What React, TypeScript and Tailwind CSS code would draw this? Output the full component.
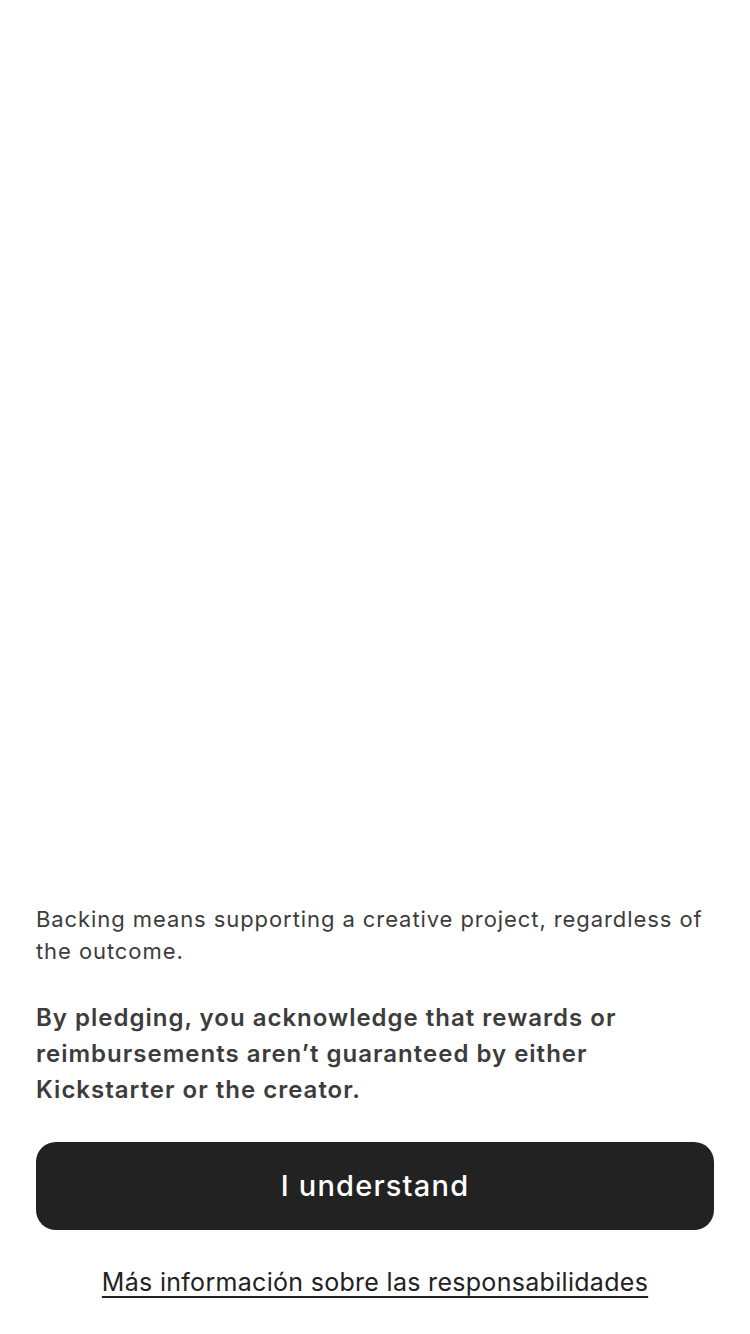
export default function App() {
  return (
    <div
      className="min-h-screen w-full bg-white flex flex-col justify-end px-[36px] pb-[37px]"
      style={{ fontFamily: 'Inter, "Noto Sans", sans-serif' }}
    >
      <p className="text-[22px] leading-[32px] text-[#3c3c3c] tracking-[0.92px]">
        Backing means supporting a creative project, regardless of the outcome.
      </p>
      <p className="mt-[33px] text-[24px] leading-[36px] font-semibold text-[#3c3c3c] tracking-[1px]">
        By pledging, you acknowledge that rewards or reimbursements aren’t guaranteed by either Kickstarter or the creator.
      </p>
      <button className="mt-[34px] h-[88px] w-full rounded-[20px] bg-[#222222] text-white text-[29px] font-medium tracking-[1.2px]">
        I understand
      </button>
      <div className="mt-[37px] flex justify-center">
        <a className="text-[25px] leading-[30px] text-[#222222] tracking-[0.3px] underline underline-offset-[5px] decoration-[2px]">
          Más información sobre las responsabilidades
        </a>
      </div>
    </div>
  );
}
